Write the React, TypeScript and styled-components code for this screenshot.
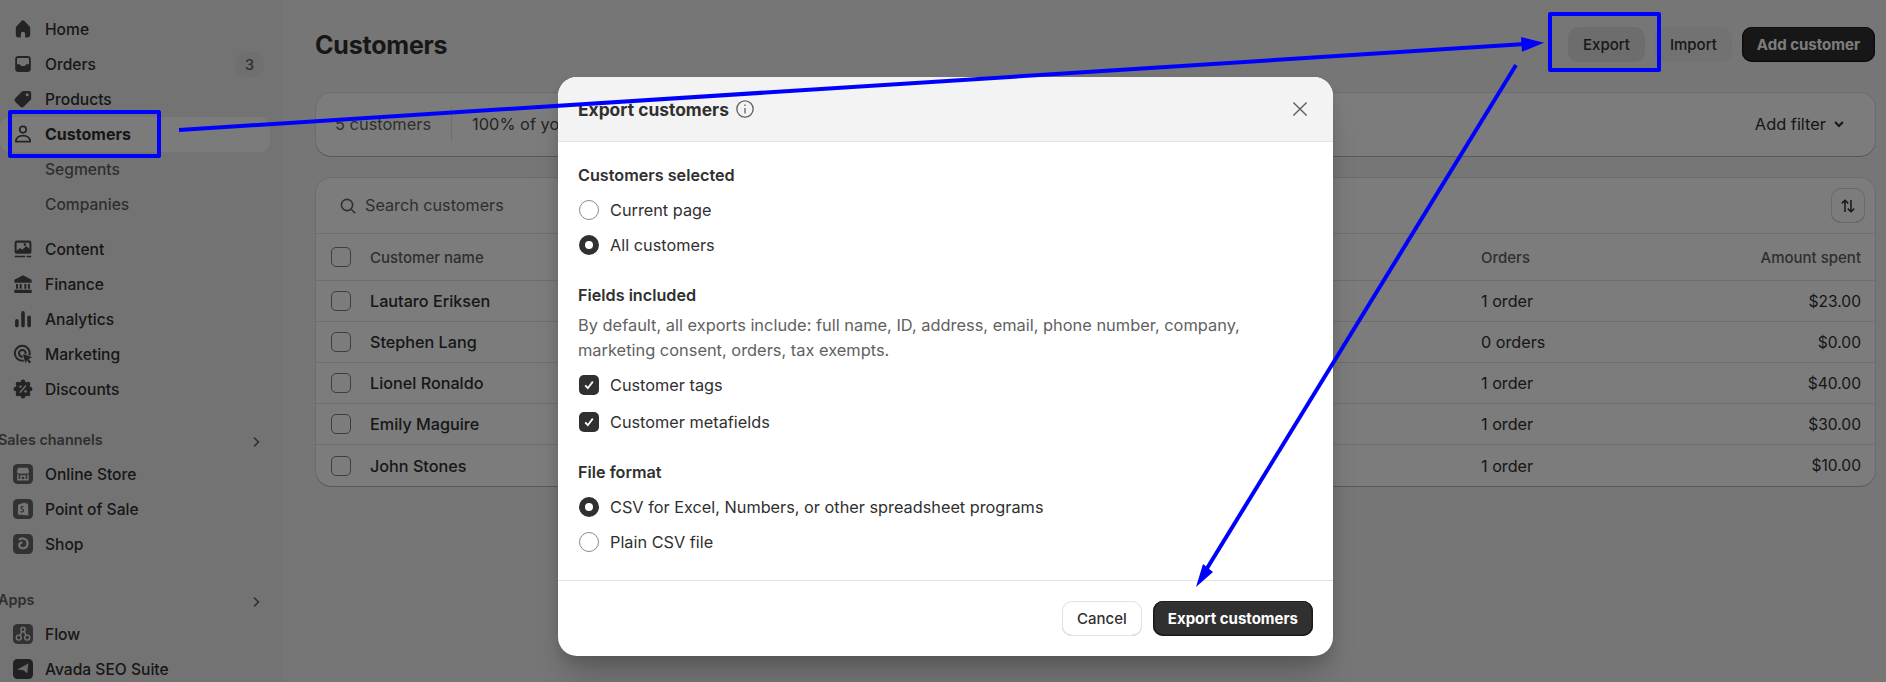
import React from "react";
import styled, { createGlobalStyle } from "styled-components";

const GlobalStyle = createGlobalStyle`
  html, body {
    margin: 0;
    height: 682px;
    overflow: hidden;
    background: #f1f1f1;
    font-family: Inter, "Noto Sans", sans-serif;
    font-size: 16.2px;
    color: #303030;
  }
`;

const Page = styled.div`
  position: relative;
  display: flex;
  width: 1886px;
  height: 682px;
  overflow: hidden;
`;

const Sidebar = styled.nav`
  flex: 0 0 283px;
  padding-top: 11.5px;
  background: #ebebeb;
  box-sizing: border-box;
  font-size: 15.6px;
`;

const NavRow = styled.div<{ $active?: boolean; $sub?: boolean }>`
  display: flex;
  align-items: center;
  gap: 10px;
  width: 270px;
  height: 35px;
  padding: 0 6px 0 ${(p) => (p.$sub ? "45px" : "11px")};
  box-sizing: border-box;
  border-radius: 10px;
  white-space: nowrap;
  font-size: ${(p) => (p.$active ? "16px" : "inherit")};
  font-weight: ${(p) => (p.$active ? 650 : 450)};
  color: ${(p) => (p.$sub ? "#616161" : "#303030")};
  background: ${(p) => (p.$active ? "#fafafa" : "transparent")};
`;

const NavIcon = styled.svg`
  flex: 0 0 24px;
  width: 24px;
  height: 24px;
  fill: #4a4a4a;
`;

const AppIcon = styled.svg`
  flex: 0 0 20px;
  width: 20px;
  height: 20px;
  margin: 0 2.5px 0 1.5px;
`;

const CountBadge = styled.span`
  margin-left: auto;
  width: 29px;
  height: 25px;
  border-radius: 10px;
  background: #e3e3e3;
  color: #616161;
  font-size: 14.4px;
  font-weight: 500;
  display: flex;
  align-items: center;
  justify-content: center;
`;

const NavGroup = styled.div<{ $top: number }>`
  margin-top: ${(p) => p.$top}px;
`;

const GroupHeader = styled.div`
  display: flex;
  align-items: center;
  justify-content: space-between;
  width: 266px;
  height: 34px;
  margin-left: -2px;
  font-size: 14.4px;
  font-weight: 600;
  color: #616161;
  svg {
    width: 16px;
    height: 16px;
    margin-top: 4px;
    fill: none;
    stroke: #616161;
    stroke-width: 1.6;
  }
`;

const Main = styled.main`
  flex: 1;
  padding: 27px 11px 0 33px;
  min-width: 0;
`;

const PageHeader = styled.header`
  display: flex;
  align-items: center;
  justify-content: space-between;
  height: 35px;
  margin-bottom: 31px;
`;

const Title = styled.h1`
  margin: 0 0 0 -1px;
  padding-top: 1px;
  font-size: 25px;
  font-weight: 700;
  letter-spacing: -0.2px;
  color: #303030;
`;

const Actions = styled.div`
  display: flex;
  gap: 10px;
`;

const HeaderButton = styled.button<{ $tone: "hover" | "plain" | "dark" }>`
  height: 35px;
  padding: 0 15px;
  border: 0;
  border-radius: 10px;
  font-family: inherit;
  font-size: 15px;
  font-weight: ${(p) => (p.$tone === "dark" ? 650 : 500)};
  color: ${(p) => (p.$tone === "dark" ? "#fff" : "#303030")};
  background: ${(p) => (p.$tone === "hover" ? "#dedede" : p.$tone === "plain" ? "#e8e8e8" : "#303030")};
  box-shadow: ${(p) => (p.$tone === "dark" ? "inset 0 0 0 1.5px #1a1a1a, inset 0 2px 0 #555" : "none")};
`;

const Card = styled.section`
  background: #fdfdfd;
  border-radius: 15px;
  box-shadow: 0 1px 0 rgba(26, 26, 26, 0.2), 0 0 0 1px rgba(26, 26, 26, 0.09);
  overflow: hidden;
`;

const FilterCard = styled(Card)`
  display: flex;
  align-items: center;
  height: 63px;
  padding: 0 27px 2px 19px;
  box-sizing: border-box;
  margin-bottom: 22px;
  font-size: 16.4px;
  color: #616161;
`;

const FilterStat = styled.span`
  padding-right: 20px;
  border-right: 1px solid #e3e3e3;
  line-height: 34px;
`;

const FilterShare = styled.span`
  padding-left: 20px;
  color: #4a4a4a;
`;

const AddFilter = styled.span`
  margin-left: auto;
  display: flex;
  align-items: center;
  gap: 4px;
  color: #303030;
  svg {
    width: 18px;
    height: 18px;
    fill: none;
    stroke: #303030;
    stroke-width: 1.7;
  }
`;

const SearchRow = styled.div`
  display: flex;
  align-items: center;
  gap: 8px;
  height: 56px;
  padding: 0 10px 0 23px;
  color: #616161;
  box-sizing: border-box;
  border-bottom: 1px solid #e3e3e3;
  > svg {
    width: 18px;
    height: 18px;
    fill: none;
    stroke: #616161;
    stroke-width: 1.6;
  }
`;

const SearchLabel = styled.span`
  margin-top: -2px;
`;

const SortButton = styled.span`
  margin-left: auto;
  width: 34px;
  height: 35px;
  border-radius: 10px;
  box-shadow: inset 0 0 0 1px #d8d8d8, inset 0 -1px 0 #b5b5b5;
  display: flex;
  align-items: center;
  justify-content: center;
  svg {
    width: 20px;
    height: 20px;
    fill: none;
    stroke: #303030;
    stroke-width: 1.5;
  }
`;

const TableRow = styled.div<{ $head?: boolean }>`
  display: grid;
  grid-template-columns: 39px 1fr 190px 190px;
  align-items: center;
  height: ${(p) => (p.$head ? "47px" : "41px")};
  padding: 0 14px 0 15px;
  box-sizing: border-box;
  border-bottom: 1px solid #e3e3e3;
  color: ${(p) => (p.$head ? "#616161" : "#303030")};
  font-size: ${(p) => (p.$head ? "15px" : "16.2px")};
  font-weight: ${(p) => (p.$head ? 500 : 400)};
  &:last-child {
    border-bottom: 0;
  }
`;

const NameCell = styled.span`
  font-weight: 500;
`;

const AmountCell = styled.span<{ $head?: boolean }>`
  text-align: right;
  font-size: ${(p) => (p.$head ? "15px" : "15.6px")};
`;

const RowCheck = styled.span`
  display: block;
  width: 20px;
  height: 20px;
  box-sizing: border-box;
  border: 1px solid #7f7f7f;
  border-radius: 5px;
  background: #fdfdfd;
`;

const Backdrop = styled.div`
  position: absolute;
  inset: 0;
  background: rgba(0, 0, 0, 0.51);
`;

const Modal = styled.div`
  position: absolute;
  left: 558px;
  top: 77px;
  width: 775px;
  border-radius: 19px;
  overflow: hidden;
  background: #ffffff;
  box-shadow: 0 26px 32px -8px rgba(0, 0, 0, 0.2), 0 6px 12px rgba(0, 0, 0, 0.1);
`;

const ModalHeader = styled.div`
  display: flex;
  align-items: center;
  height: 65px;
  padding: 0 21px 0 20px;
  box-sizing: border-box;
  background: #f3f3f3;
  border-bottom: 1px solid #e3e3e3;
`;

const ModalTitle = styled.h2`
  margin: 0;
  font-size: 17.4px;
  font-weight: 650;
  color: #303030;
`;

const InfoIcon = styled.svg`
  width: 24px;
  height: 24px;
  margin-left: 4px;
  fill: none;
  stroke: #616161;
  stroke-width: 1.1;
`;

const CloseIcon = styled.svg`
  width: 24px;
  height: 24px;
  margin-left: auto;
  fill: none;
  stroke: #616161;
  stroke-width: 1.2;
`;

const ModalBody = styled.div`
  display: flex;
  flex-direction: column;
  gap: 20px;
  padding: 20.5px 20px 20px;
  border-bottom: 1px solid #e3e3e3;
`;

const FieldSet = styled.div`
  display: flex;
  flex-direction: column;
`;

const FieldLabel = styled.div`
  font-weight: 600;
  line-height: 24px;
  margin-bottom: 6px;
`;

const FieldHelp = styled.p`
  margin: 0 0 4px;
  font-size: 16.4px;
  font-weight: 400;
  line-height: 25.5px;
  color: #616161;
  white-space: nowrap;
`;

const Option = styled.div<{ $spaced?: boolean }>`
  display: flex;
  align-items: center;
  gap: 11px;
  height: 35px;
  margin-bottom: ${(p) => (p.$spaced ? "2px" : 0)};
  font-size: 16.3px;
  font-weight: 400;
`;

const Radio = styled.span<{ $on?: boolean }>`
  flex: 0 0 20px;
  height: 20px;
  margin-left: 1px;
  box-sizing: border-box;
  border-radius: 50%;
  background: #fff;
  border: ${(p) => (p.$on ? "6.5px solid #303030" : "1px solid #8a8a8a")};
`;

const CheckBox = styled.span`
  flex: 0 0 20px;
  height: 20px;
  margin-left: 1px;
  border-radius: 5px;
  background: #303030;
  display: flex;
  align-items: center;
  justify-content: center;
  svg {
    width: 14px;
    height: 14px;
    fill: none;
    stroke: #fff;
    stroke-width: 1.8;
  }
`;

const ModalFooter = styled.div`
  display: flex;
  justify-content: flex-end;
  gap: 11px;
  padding: 20px;
`;

const FooterButton = styled.button<{ $primary?: boolean }>`
  height: 35px;
  padding: 0 15px;
  border: 0;
  border-radius: 10px;
  font-family: inherit;
  font-size: 15px;
  font-weight: ${(p) => (p.$primary ? 650 : 550)};
  color: ${(p) => (p.$primary ? "#fff" : "#303030")};
  background: ${(p) => (p.$primary ? "#303030" : "#fff")};
  box-shadow: ${(p) =>
    p.$primary
      ? "inset 0 0 0 1.5px #1a1a1a, inset 0 2px 0 #555"
      : "inset 0 0 0 1px #e3e3e3, inset 0 -1px 0 #b5b5b5"};
`;

const CalloutBox = styled.div<{ $x: number; $y: number; $w: number; $h: number }>`
  position: absolute;
  left: ${(p) => p.$x}px;
  top: ${(p) => p.$y}px;
  width: ${(p) => p.$w}px;
  height: ${(p) => p.$h}px;
  box-sizing: border-box;
  border: 4px solid #0000ff;
  border-radius: 2px;
`;

const ArrowLayer = styled.svg`
  position: absolute;
  left: 0;
  top: 0;
  width: 1886px;
  height: 682px;
  pointer-events: none;
`;

const icons: Record<string, React.ReactNode> = {
  home: <path d="M8.344 3.692a2.25 2.25 0 0 1 3.312 0l3.854 4.19c.316.344.49.793.49 1.258V15a2 2 0 0 1-2 2h-1.5a.75.75 0 0 1-.75-.75V14a1.75 1.75 0 0 0-3.5 0v2.25a.75.75 0 0 1-.75.75H6a2 2 0 0 1-2-2V9.14c0-.465.174-.914.49-1.258z" />,
  orders: <path fillRule="evenodd" d="M6.25 3.25h7.5a2.75 2.75 0 0 1 2.75 2.75v8a2.75 2.75 0 0 1-2.75 2.75h-7.5A2.75 2.75 0 0 1 3.5 14V6a2.75 2.75 0 0 1 2.75-2.75zM6 5a1 1 0 0 0-1 1v4.2h2.4l1 1.5h3.2l1-1.5H15V6a1 1 0 0 0-1-1z" />,
  tag: <path fillRule="evenodd" d="M10.6 3.3H15a1.8 1.8 0 0 1 1.8 1.8v4.4a2 2 0 0 1-.6 1.4l-5.6 5.6a2 2 0 0 1-2.8 0l-4.3-4.3a2 2 0 0 1 0-2.8l5.6-5.6a2 2 0 0 1 1.4-.5zM13.5 5.3a1.25 1.25 0 1 0 0 2.5 1.25 1.25 0 0 0 0-2.5z" />,
  person: (
    <g fill="none" stroke="#4a4a4a" strokeWidth="1.4">
      <circle cx="10" cy="6.3" r="2.7" />
      <path d="M4 16.3c0-3.2 2.6-5 6-5s6 1.8 6 5z" strokeLinejoin="round" />
    </g>
  ),
  content: <path fillRule="evenodd" d="M5 3h10a2 2 0 0 1 2 2v7.5a1.5 1.5 0 0 1-1.5 1.5h-11A1.5 1.5 0 0 1 3 12.5V5a2 2 0 0 1 2-2zM4.7 4.8v6.6l2.8-2.2 1.8 1.4 3.4-3 2.6 2.4V4.8zM11.6 5.2a1.1 1.1 0 1 1 0 2.2 1.1 1.1 0 0 1 0-2.2zM3.2 15.6h8.6v1.2H3.2zM13 15.6h3.8v1.2H13z" />,
  finance: <path d="M10 2.8l7.2 3.6V9H2.8V6.4zM2.8 14.8h14.4v2.6H2.8zM4.2 10h1.7v4H4.2zM7.2 10h1.7v4H7.2zM11.1 10h1.7v4h-1.7zM14.1 10h1.7v4h-1.7z" />,
  analytics: (
    <g>
      <rect x="3.4" y="10" width="3" height="7" rx="1.5" />
      <rect x="8.5" y="3.4" width="3" height="13.6" rx="1.5" />
      <rect x="13.6" y="7" width="3" height="10" rx="1.5" />
    </g>
  ),
  marketing: (
    <g>
      <circle cx="9.4" cy="9.4" r="6.2" fill="none" stroke="#4a4a4a" strokeWidth="1.7" />
      <circle cx="9.4" cy="9.4" r="2.8" fill="none" stroke="#4a4a4a" strokeWidth="1.7" />
      <path d="M10 10l7.6 2.7-2.9 1.4 2 2.6-1.4 1.2-2.1-2.7-1.2 2.8z" stroke="#ebebeb" strokeWidth="1.3" paintOrder="stroke" />
    </g>
  ),
  discounts: (
    <g>
      <circle cx="10" cy="10" r="6.2" />
      {[0, 45, 90, 135, 180, 225, 270, 315].map((a) => (
        <circle key={a} cx={10 + 6 * Math.cos((a * Math.PI) / 180)} cy={10 + 6 * Math.sin((a * Math.PI) / 180)} r="1.9" />
      ))}
      <path d="M7.8 12.6l4.4-5.2" stroke="#ebebeb" strokeWidth="1.2" strokeLinecap="round" />
      <circle cx="7.9" cy="8" r="1" fill="#ebebeb" />
      <circle cx="12.1" cy="12" r="1" fill="#ebebeb" />
    </g>
  ),
};

const apps: Record<string, React.ReactNode> = {
  store: (
    <g>
      <path d="M5.2 3.8h9.6l1.4 3.8a2 2 0 0 1-3.2 1.6 2.6 2.6 0 0 1-3 0 2.6 2.6 0 0 1-3 0 2 2 0 0 1-3.2-1.6z" fill="#ececec" />
      <path d="M5 10.4v5.4h10v-5.4M8 15.6v-3.6h4v3.6" fill="none" stroke="#ececec" strokeWidth="1.5" />
    </g>
  ),
  pos: (
    <g>
      <path d="M5 5.8l6.4-2.4 1 .8 2.6.6.4 11.6-10.4-.8z" fill="#ececec" />
      <path d="M10.6 7.8c-1.5-.7-2.8 0-2.6 1.1.2 1.2 2.6 1.2 2.6 2.7 0 1.2-1.7 1.7-3 .8" fill="none" stroke="#5f5f5f" strokeWidth="1.2" />
    </g>
  ),
  shop: (
    <path d="M5.8 5.8c1.6-1.2 3.6-1.6 5.2-1.1 2.7.8 3.8 3 3.5 5.4-.3 2.4-2.2 4.2-4.7 4.2-2 0-3.6-1.3-3.6-3 0-1.6 1.4-2.8 3.2-2.8" fill="none" stroke="#ececec" strokeWidth="2.2" />
  ),
  flow: (
    <g fill="none" stroke="#ececec" strokeWidth="1.4">
      <circle cx="10" cy="5.6" r="2.2" />
      <circle cx="5.8" cy="13.6" r="2.5" />
      <circle cx="14.2" cy="13.6" r="2.5" />
      <path d="M9 7.6l-2 3.6M11 7.6l2 3.6" />
    </g>
  ),
  avada: <path d="M15.4 4.4l-1.2 10.2-3.6-3.4-6.4-.8z" fill="#d8d8d8" />,
};

const appFill: Record<string, string> = { store: "#666", pos: "#666", shop: "#666", flow: "#666", avada: "#444" };

const NavItem: React.FC<{ icon?: string; app?: string; label: string; active?: boolean; sub?: boolean; children?: React.ReactNode }> = ({
  icon,
  app,
  label,
  active,
  sub,
  children,
}) => (
  <NavRow $active={active} $sub={sub}>
    {icon && <NavIcon viewBox="0 0 20 20">{icons[icon]}</NavIcon>}
    {app && (
      <AppIcon viewBox="0 0 20 20">
        <rect width="20" height="20" rx="4.5" fill={appFill[app]} />
        {apps[app]}
      </AppIcon>
    )}
    {label}
    {children}
  </NavRow>
);

const Chevron = () => (
  <svg viewBox="0 0 16 16">
    <path d="M6 3.5l4.5 4.5L6 12.5" />
  </svg>
);

const customers = [
  { name: "Lautaro Eriksen", orders: "1 order", spent: "$23.00" },
  { name: "Stephen Lang", orders: "0 orders", spent: "$0.00" },
  { name: "Lionel Ronaldo", orders: "1 order", spent: "$40.00" },
  { name: "Emily Maguire", orders: "1 order", spent: "$30.00" },
  { name: "John Stones", orders: "1 order", spent: "$10.00" },
];

const Tick = () => (
  <svg viewBox="0 0 14 14">
    <path d="M3.2 7.4l2.6 2.8 5-6.6" />
  </svg>
);

export default function App() {
  return (
    <Page>
      <GlobalStyle />
      <Sidebar>
        <NavItem icon="home" label="Home" />
        <NavItem icon="orders" label="Orders">
          <CountBadge>3</CountBadge>
        </NavItem>
        <NavItem icon="tag" label="Products" />
        <NavItem icon="person" label="Customers" active />
        <NavItem label="Segments" sub />
        <NavItem label="Companies" sub />
        <NavGroup $top={10}>
          <NavItem icon="content" label="Content" />
          <NavItem icon="finance" label="Finance" />
          <NavItem icon="analytics" label="Analytics" />
          <NavItem icon="marketing" label="Marketing" />
          <NavItem icon="discounts" label="Discounts" />
        </NavGroup>
        <NavGroup $top={16}>
          <GroupHeader>
            Sales channels
            <Chevron />
          </GroupHeader>
          <NavItem app="store" label="Online Store" />
          <NavItem app="pos" label="Point of Sale" />
          <NavItem app="shop" label="Shop" />
        </NavGroup>
        <NavGroup $top={21}>
          <GroupHeader>
            Apps
            <Chevron />
          </GroupHeader>
          <NavItem app="flow" label="Flow" />
          <NavItem app="avada" label="Avada SEO Suite" />
        </NavGroup>
      </Sidebar>

      <Main>
        <PageHeader>
          <Title>Customers</Title>
          <Actions>
            <HeaderButton $tone="hover">Export</HeaderButton>
            <HeaderButton $tone="plain">Import</HeaderButton>
            <HeaderButton $tone="dark">Add customer</HeaderButton>
          </Actions>
        </PageHeader>

        <FilterCard>
          <FilterStat>5 customers</FilterStat>
          <FilterShare>100% of your customer base</FilterShare>
          <AddFilter>
            Add filter
            <svg viewBox="0 0 14 14">
              <path d="M4 5.5L7 8.5l3-3" />
            </svg>
          </AddFilter>
        </FilterCard>

        <Card>
          <SearchRow>
            <svg viewBox="0 0 18 18">
              <circle cx="8" cy="8" r="5.6" />
              <path d="M12.2 12.2l4 4" />
            </svg>
            <SearchLabel>Search customers</SearchLabel>
            <SortButton>
              <svg viewBox="0 0 20 20">
                <path d="M7 16V4.2M3.8 7.4L7 4.2l3.2 3.2M13 4v11.8M9.8 12.6l3.2 3.2 3.2-3.2" />
              </svg>
            </SortButton>
          </SearchRow>
          <TableRow $head>
            <RowCheck />
            <span>Customer name</span>
            <span>Orders</span>
            <AmountCell $head>Amount spent</AmountCell>
          </TableRow>
          {customers.map((customer) => (
            <TableRow key={customer.name}>
              <RowCheck />
              <NameCell>{customer.name}</NameCell>
              <span>{customer.orders}</span>
              <AmountCell>{customer.spent}</AmountCell>
            </TableRow>
          ))}
        </Card>
      </Main>

      <Backdrop />

      <Modal>
        <ModalHeader>
          <ModalTitle>Export customers</ModalTitle>
          <InfoIcon viewBox="0 0 20 20">
            <circle cx="10" cy="10" r="6.8" />
            <path d="M10 9.2v4.6M10 6.2v1.2" />
          </InfoIcon>
          <CloseIcon viewBox="0 0 20 20">
            <path d="M4.5 4.5l11 11M15.5 4.5l-11 11" />
          </CloseIcon>
        </ModalHeader>
        <ModalBody>
          <FieldSet>
            <FieldLabel>Customers selected</FieldLabel>
            <Option>
              <Radio />
              Current page
            </Option>
            <Option>
              <Radio $on />
              All customers
            </Option>
          </FieldSet>
          <FieldSet>
            <FieldLabel>Fields included</FieldLabel>
            <FieldHelp>
              By default, all exports include: full name, ID, address, email, phone number, company,
              <br />
              marketing consent, orders, tax exempts.
            </FieldHelp>
            <Option $spaced>
              <CheckBox>
                <Tick />
              </CheckBox>
              Customer tags
            </Option>
            <Option>
              <CheckBox>
                <Tick />
              </CheckBox>
              Customer metafields
            </Option>
          </FieldSet>
          <FieldSet>
            <FieldLabel>File format</FieldLabel>
            <Option>
              <Radio $on />
              CSV for Excel, Numbers, or other spreadsheet programs
            </Option>
            <Option>
              <Radio />
              Plain CSV file
            </Option>
          </FieldSet>
        </ModalBody>
        <ModalFooter>
          <FooterButton>Cancel</FooterButton>
          <FooterButton $primary>Export customers</FooterButton>
        </ModalFooter>
      </Modal>

      <CalloutBox $x={8} $y={110} $w={153} $h={48} />
      <CalloutBox $x={1548} $y={12} $w={113} $h={60} />
      <ArrowLayer viewBox="0 0 1886 682">
        <path d="M179 130L1525 44" stroke="#0000ff" strokeWidth="4" fill="none" />
        <path d="M1544 42.7L1521 37l1 14.7z" fill="#0000ff" />
        <path d="M1516 65L1206 570" stroke="#0000ff" strokeWidth="4" fill="none" />
        <path d="M1196 587l7-23 10 8z" fill="#0000ff" />
      </ArrowLayer>
    </Page>
  );
}
